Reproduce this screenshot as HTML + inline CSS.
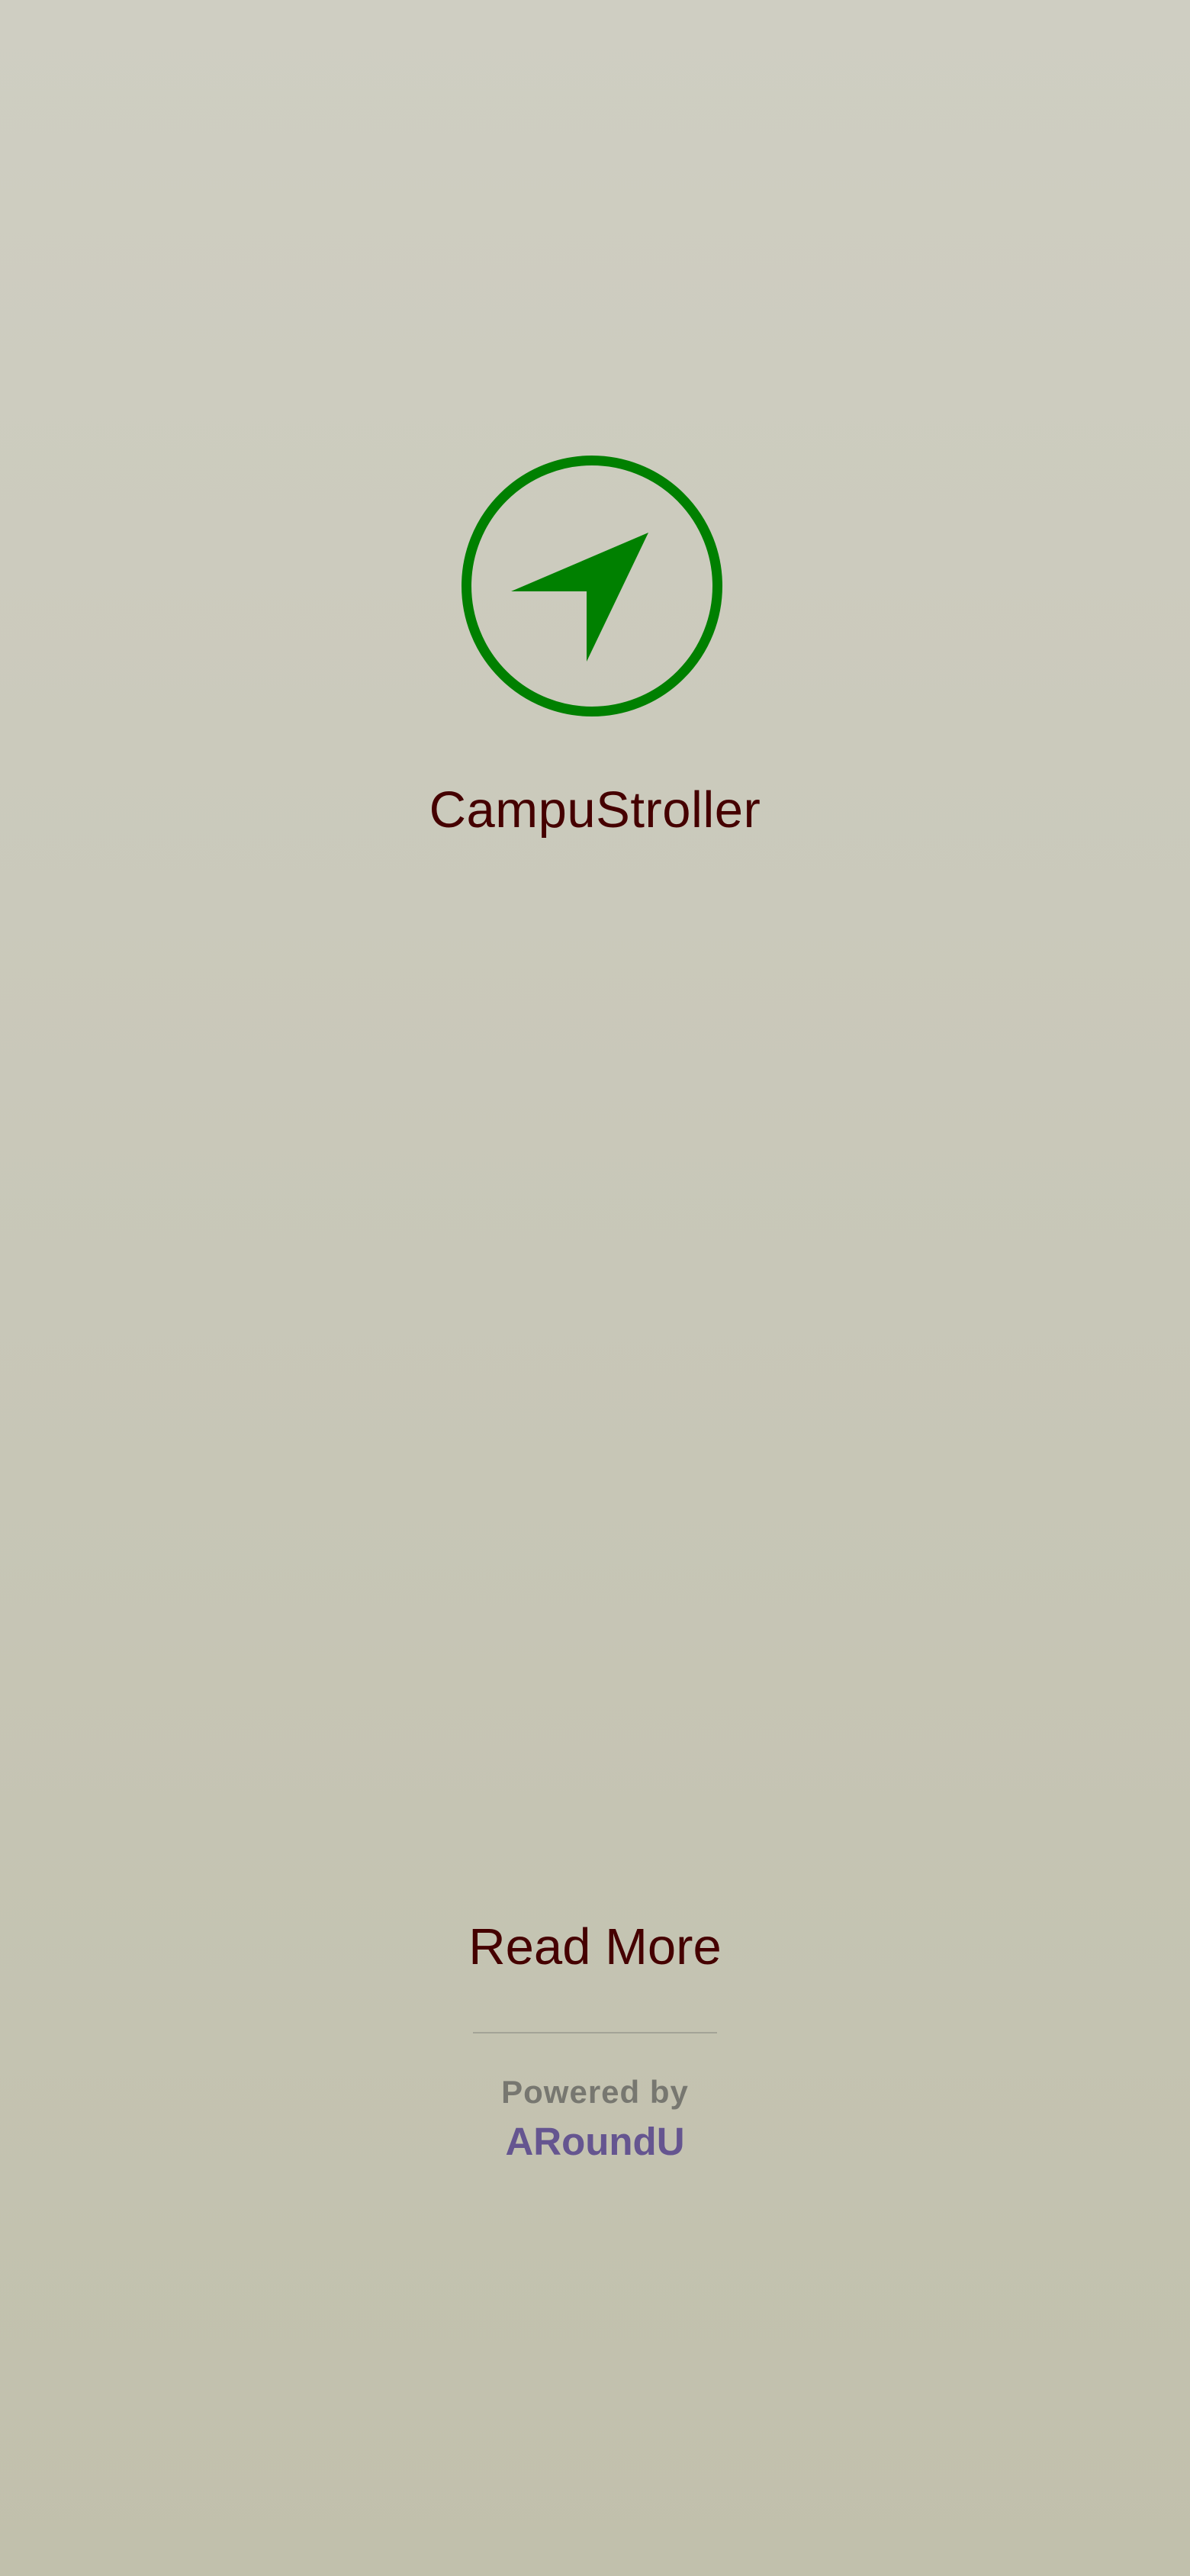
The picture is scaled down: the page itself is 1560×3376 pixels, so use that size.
<!DOCTYPE html>
<html><head><meta charset="utf-8"><style>
html,body{margin:0;padding:0}
body{width:1560px;height:3376px;position:relative;overflow:hidden;
background:linear-gradient(180deg,#cfcec2 0%,#c8c7b8 50%,#c1c0ac 100%);
font-family:"Liberation Sans",sans-serif}
.t{position:absolute;left:0;width:1560px;text-align:center;white-space:nowrap}
</style></head><body>
<svg style="position:absolute;left:0;top:0" width="1560" height="1000">
<circle cx="776" cy="768" r="164.5" fill="none" stroke="#008000" stroke-width="13"/>
<path d="M850 698 L670 775 L769 775 L769 867 Z" fill="#008000"/>
</svg>
<div class="t" style="top:1022px;font-size:67px;line-height:80px;color:#450000;letter-spacing:0.5px">CampuStroller</div>
<div class="t" style="top:2512px;font-size:67px;line-height:80px;color:#450000">Read More</div>
<div style="position:absolute;left:620px;top:2663px;width:320px;height:2px;background:#a3a397"></div>
<div class="t" style="top:2717px;font-size:42px;line-height:50px;color:#777770;font-weight:bold;letter-spacing:1px">Powered by</div>
<div class="t" style="top:2777px;font-size:51px;line-height:60px;color:#655590;font-weight:bold">ARoundU</div>
</body></html>
